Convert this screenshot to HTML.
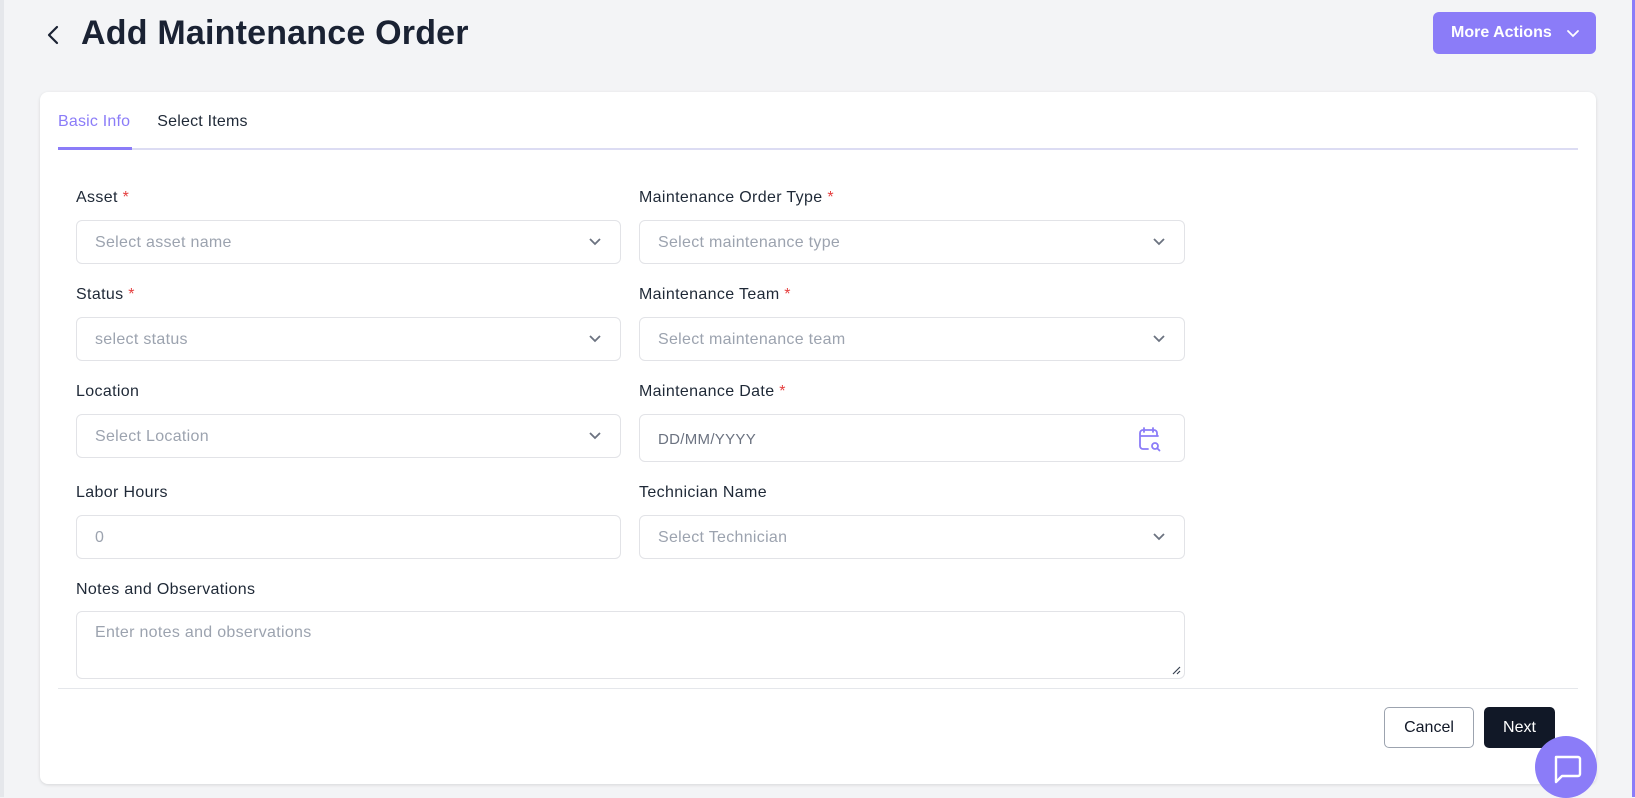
<!DOCTYPE html>
<html><head><meta charset="utf-8"><style>
*{box-sizing:border-box;margin:0;padding:0}
body{width:1635px;height:797px;background:#f3f4f6;font-family:"Liberation Sans",sans-serif;position:relative;overflow:hidden;color:#1f2937}
.edge{position:absolute;right:0;top:0;width:3px;height:797px;background:#8b7cf8}
.ledge{position:absolute;left:0;top:0;width:4px;height:797px;background:#e5e7eb}
.back{position:absolute;left:44px;top:23px}
h1{position:absolute;left:81px;top:14px;font-size:34px;font-weight:700;color:#1a2233;letter-spacing:0.2px}
.more{position:absolute;left:1433px;top:12px;width:163px;height:42px;background:#8b7cf8;border-radius:6px;color:#fff;font-size:16px;font-weight:700;display:flex;align-items:center;padding-left:18px}
.card{position:absolute;left:40px;top:92px;width:1556px;height:692px;background:#fff;border-radius:8px;box-shadow:0 1px 3px rgba(0,0,0,.12)}
.tabs{position:absolute;left:58px;top:113px;font-size:16px;letter-spacing:0.2px}
.tline{position:absolute;left:58px;top:148px;width:1520px;height:1.5px;background:#dcdcf3}
.tact{position:absolute;left:58px;top:147px;width:74px;height:2.5px;background:#8b7cf8}
.lbl{position:absolute;font-size:16px;letter-spacing:0.35px;color:#1f2937;margin-top:1px}
.lbl span{color:#e53e3e}
.in{position:absolute;height:44px;border:1px solid #e2e3e7;border-radius:6px;font-size:16px;letter-spacing:0.3px;color:#9ca3af;display:flex;align-items:center;padding-left:18px;padding-top:2px}
.chev{position:absolute;right:18px;top:16px}
.div{position:absolute;left:58px;top:688px;width:1520px;height:1px;background:#e5e7eb}
.btn{position:absolute;top:707px;height:41px;border-radius:5px;font-size:16px;display:flex;align-items:center;justify-content:center}
.chat{position:absolute;left:1535px;top:736px;width:62px;height:62px;border-radius:50%;background:#8b7cf8}
</style></head><body>
<div class="ledge"></div><div class="edge"></div>
<svg class="back" width="20" height="24" viewBox="0 0 20 24"><path d="M13 4 L5 12 L13 20" fill="none" stroke="#1a2233" stroke-width="2.2" stroke-linecap="round" stroke-linejoin="round"/></svg>
<h1>Add Maintenance Order</h1>
<div class="more">More Actions<svg style="margin-left:14px" width="14" height="10" viewBox="0 0 14 10"><path d="M2 3 L7 8 L12 3" fill="none" stroke="#fff" stroke-width="1.8" stroke-linecap="round"/></svg></div>
<div class="card"></div>
<div class="tabs"><span style="color:#8b7cf8">Basic Info</span><span style="margin-left:27px;color:#1f2937">Select Items</span></div>
<div class="tline"></div><div class="tact"></div>

<div class="lbl" style="left:76px;top:188px">Asset <span>*</span></div>
<div class="lbl" style="left:639px;top:188px">Maintenance Order Type <span>*</span></div>
<div class="in" style="left:76px;top:220px;width:545px">Select asset name<svg class="chev" width="14" height="10" viewBox="0 0 14 10"><path d="M2 2 L7 7 L12 2" fill="none" stroke="#6b7280" stroke-width="1.8"/></svg></div>
<div class="in" style="left:639px;top:220px;width:546px">Select maintenance type<svg class="chev" width="14" height="10" viewBox="0 0 14 10"><path d="M2 2 L7 7 L12 2" fill="none" stroke="#6b7280" stroke-width="1.8"/></svg></div>

<div class="lbl" style="left:76px;top:285px">Status <span>*</span></div>
<div class="lbl" style="left:639px;top:285px">Maintenance Team <span>*</span></div>
<div class="in" style="left:76px;top:317px;width:545px">select status<svg class="chev" width="14" height="10" viewBox="0 0 14 10"><path d="M2 2 L7 7 L12 2" fill="none" stroke="#6b7280" stroke-width="1.8"/></svg></div>
<div class="in" style="left:639px;top:317px;width:546px">Select maintenance team<svg class="chev" width="14" height="10" viewBox="0 0 14 10"><path d="M2 2 L7 7 L12 2" fill="none" stroke="#6b7280" stroke-width="1.8"/></svg></div>

<div class="lbl" style="left:76px;top:382px">Location</div>
<div class="lbl" style="left:639px;top:382px">Maintenance Date <span>*</span></div>
<div class="in" style="left:76px;top:414px;width:545px">Select Location<svg class="chev" width="14" height="10" viewBox="0 0 14 10"><path d="M2 2 L7 7 L12 2" fill="none" stroke="#6b7280" stroke-width="1.8"/></svg></div>
<div class="in" style="left:639px;top:414px;width:546px;height:48px;font-size:15px;color:#6b7280">DD/MM/YYYY<svg style="position:absolute;right:22px;top:11px" width="24" height="26" viewBox="0 0 24 26"><path d="M19 10 V7 a3 3 0 0 0 -3 -3 H5 a3 3 0 0 0 -3 3 V20 a3 3 0 0 0 3 3 H10 M2 10 H20 M6 2 V6 M15 2 V6" fill="none" stroke="#8b7cf8" stroke-width="1.8" stroke-linecap="round"/><circle cx="17" cy="20" r="3" fill="none" stroke="#8b7cf8" stroke-width="1.8"/><path d="M19.2 22.2 L21.5 24.5" stroke="#8b7cf8" stroke-width="1.8" stroke-linecap="round"/></svg></div>

<div class="lbl" style="left:76px;top:483px">Labor Hours</div>
<div class="lbl" style="left:639px;top:483px">Technician Name</div>
<div class="in" style="left:76px;top:515px;width:545px">0</div>
<div class="in" style="left:639px;top:515px;width:546px">Select Technician<svg class="chev" width="14" height="10" viewBox="0 0 14 10"><path d="M2 2 L7 7 L12 2" fill="none" stroke="#6b7280" stroke-width="1.8"/></svg></div>

<div class="lbl" style="left:76px;top:580px">Notes and Observations</div>
<div class="in" style="left:76px;top:611px;width:1109px;height:68px;align-items:flex-start;padding-top:12px">Enter notes and observations<svg style="position:absolute;right:3px;bottom:3px" width="9" height="9" viewBox="0 0 9 9"><path d="M8 1 L1 8 M8 5 L5 8" stroke="#374151" stroke-width="1.2"/></svg></div>

<div class="div"></div>
<div class="btn" style="left:1384px;width:90px;border:1px solid #9ca3af;color:#111827;background:#fff">Cancel</div>
<div class="btn" style="left:1484px;width:71px;background:#111827;color:#fff">Next</div>
<div class="chat"><svg style="position:absolute;left:16px;top:17px" width="32" height="32" viewBox="0 0 32 32"><path d="M5 4 H27 a2 2 0 0 1 2 2 V21 a2 2 0 0 1 -2 2 H11 L5 29 Z" fill="none" stroke="#fff" stroke-width="2.4" stroke-linejoin="round"/></svg></div>
</body></html>
